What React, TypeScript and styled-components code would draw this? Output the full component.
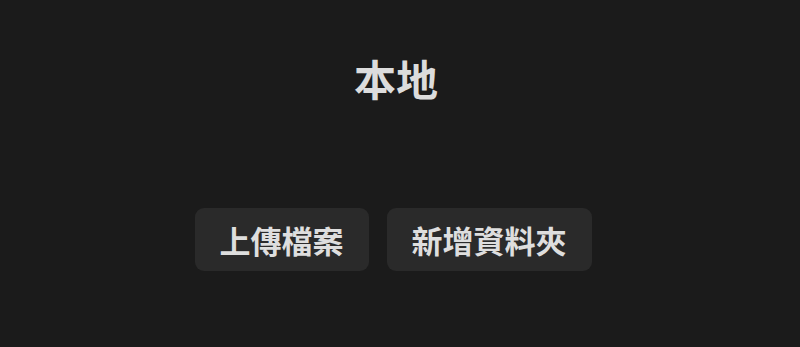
import React from "react";
import styled, { createGlobalStyle } from "styled-components";

const Global = createGlobalStyle`
  html, body {
    margin: 0;
    padding: 0;
    background: #1b1b1b;
  }
  body {
    font-family: "Noto Sans CJK TC", "Noto Sans", sans-serif;
  }
`;

const Page = styled.main`
  width: 800px;
  height: 347px;
  display: flex;
  flex-direction: column;
  align-items: center;
  padding: 51px 8px 0 0;
  box-sizing: border-box;
`;

const Title = styled.h1`
  margin: 0;
  font-size: 42px;
  line-height: 54px;
  font-weight: 700;
  color: #dcdcdc;
`;

const Actions = styled.div`
  display: flex;
  gap: 18px;
  margin: 103px 6px 0 0;
`;

const Button = styled.button`
  height: 63px;
  padding: 0 25px;
  border: none;
  border-radius: 9px;
  background: #2a2a2a;
  color: #dedede;
  font-family: inherit;
  font-size: 31px;
  font-weight: 700;
  cursor: pointer;
`;

export default function App() {
  return (
    <>
      <Global />
      <Page>
        <Title>本地</Title>
        <Actions>
          <Button>上傳檔案</Button>
          <Button>新增資料夾</Button>
        </Actions>
      </Page>
    </>
  );
}
